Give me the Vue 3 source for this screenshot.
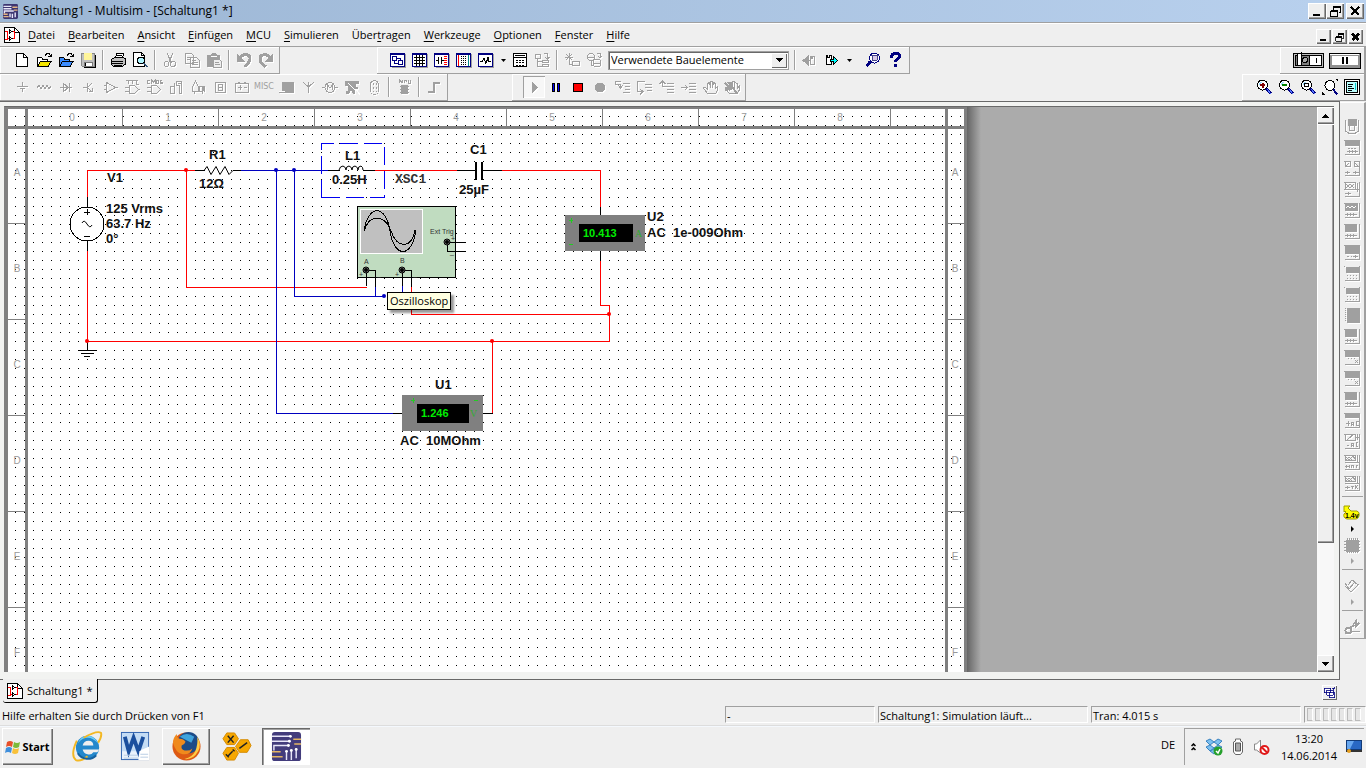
<script setup>
import { ref } from 'vue'

const menus = [
  ['', 'D', 'atei'], ['', 'B', 'earbeiten'], ['', 'A', 'nsicht'], ['', 'E', 'infügen'],
  ['', 'M', 'CU'], ['', 'S', 'imulieren'], ['Über', 't', 'ragen'], ['', 'W', 'erkzeuge'],
  ['', 'O', 'ptionen'], ['', 'F', 'enster'], ['', 'H', 'ilfe']
]
const component = ref('Verwendete Bauelemente')

const lens = '<circle cx="6.5" cy="6" r="5" fill="#fff" stroke="#000"/><path d="M3 5.500L5.500 3" stroke="#9df" fill="none"/><path d="M10.500 9.500l4 5" stroke="#000080" stroke-width="3"/><path d="M11 10l4 5" stroke="#5577ff"/>'
const folder = (c, d) => `<path d="M1.500 14.500v-9h4l1 1.500h5v2" fill="${c}" stroke="#000"/><path d="M1.500 14.500l3-5.500h11l-3.500 5.500z" fill="${d}" stroke="#000"/><path d="M9 3.500l2-2h2l2 3m0-3v3h-3" stroke="#000" fill="none"/>`
const win = (inner) => `<path d="M2 2h14v14h-14z" fill="#a0a0a0" stroke="none"/><path d="M0 1h15v14h-15z" fill="#000080" stroke="none"/><path d="M1 3h13v11h-13z" fill="#fff" stroke="none"/>${inner}`
const sheetIcon = '<path d="M.5 .5h10l5 5v10h-15z" fill="#fff" stroke="#000"/><path d="M10.500 .5v5h5" fill="none" stroke="#000"/><path d="M1 4.500h2v8h-2M3 11.500h4M8 4.500h2v7h-2" stroke="#f00" fill="none"/><path d="M5 2.500l3 2-3 2zM5 9.500l3 2-3 2z" stroke="#000" fill="#fff"/>'
const box = (inner) => `<path d="M0 1h1M1 15.500h14.500v-15" />${inner}`

const icons = {
  sheet: sheetIcon,
  fresh: '<path d="M2.500 1.500h7l4 4v9h-11z" fill="#fff" stroke="#000"/><path d="M9.500 1.500v4h4" stroke="#000" fill="none"/>',
  open: folder('#fff', '#f5e600'),
  samples: folder('#3b8cff', '#3b8cff'),
  save: '<path d="M1.500 1.500h13v13h-12l-1-1z" fill="#c0c0c0" stroke="#888"/><path d="M4 1h8v7h-8z" fill="#fff59a" stroke="none"/><path d="M4 10.500h8v4h-8z" fill="#fff" stroke="#777"/><path d="M5.500 11v3M15.500 3v12.500h-12" stroke="#000"/>',
  print: '<path d="M5.500 6.500l1-5h7l-1 5" fill="#fff" stroke="#000"/><path d="M1.500 7.500l3-2h9l2 1.500v5l-3 2.500h-9l-2-2z" fill="#c0c0c0" stroke="#000"/><path d="M7 3.500h5M6.500 5.500h5M1 9.500h12M1 11.500h12M4 13.500h8" stroke="#000"/>',
  preview: '<path d="M1.500 .5h8l3 3v11h-11z" fill="#fff" stroke="#000"/><path d="M9.500 .5v3h3" fill="none" stroke="#000"/><circle cx="9" cy="8.500" r="3.500" fill="#b0f4ff" stroke="#000"/><path d="M11.500 11l4 4" stroke="#357" stroke-width="2"/>',
  cut: '<path d="M5 1l4 9M11 1l-4 9"/><circle cx="4.500" cy="12" r="2.500"/><circle cx="11" cy="12" r="2.500"/>',
  copy: '<path d="M1.500 1.500h6l2 2v8h-8zM6.500 5.500h6l3 3v7h-9zM3 5.500h3M3 7.500h3M8 8.500h4M8 10.500h6M8 12.500h6"/>',
  paste: '<path d="M1 3h4l1-2h4l1 2h3v4h-6v8h-7z" fill="currentColor" stroke="none"/><path d="M7.500 7.500h6l2 2v6h-8z" fill="#efefef"/><path d="M9 10.500h4M9 12.500h5"/><path d="M5 4.500h6" stroke="#fff"/>',
  undo: '<path d="M4 6c3-5 11-4 10 1 0 4-4 5-5 8" stroke-width="3"/><path d="M1 1v9h8z" fill="currentColor" stroke="none"/>',
  redo: '<path d="M12 6c-3-5-10-4-10 1 0 5 4 6 6 8" stroke-width="3"/><path d="M15 1v9h-8z" fill="currentColor" stroke="none"/>',
  win1: win('<path d="M2.500 4.500h4v4h-4zM8.500 8.500h4v4h-4zM4.500 9v2.500h4M7 6.500h3v2" stroke="#000080" fill="none"/>'),
  win2: win('<path d="M2 5.500h11M2 8.500h11M2 11.500h11M4.500 3v11M7.500 3v11M10.500 3v11" stroke="#000" fill="none"/>'),
  win3: win('<path d="M2 8.500h3M7 8.500h3M4.500 5v7M7.500 5v7" stroke="#000"/><path d="M10 4.500h3M10 6.500h3M10 8.500h3M10 10.500h3M10 12.500h3" stroke="#f00"/>'),
  win4: win('<path d="M2.500 3v11" stroke="#f00"/><path d="M5.500 4v9M7.500 4v9M9.500 4v9" stroke="#000" stroke-dasharray="1 1"/><path d="M12.500 3v11" stroke="#088"/>'),
  win5: win('<path d="M2 9.500h2l2-3 2 5 2-6 1 4h2" stroke="#000" fill="none"/>'),
  calc: '<rect x="1.500" y="1.500" width="13" height="13" fill="#fff" stroke="#000"/><path d="M3 3.500h10M1 5.500h14" stroke="#000"/><path d="M4 8h9M4 10.500h9M4 13h9" stroke="#000" stroke-dasharray="2 1"/>',
  tree: '<path d="M1.500 2.500h5v4h-5zM9.500 1.500h4v4M11 5l2.500 2 2-2M8.500 8.500h6v2h-6zM8.500 12.500h6v2h-6zM3.500 7v7h5M4 9.500h4"/>',
  star: '<path d="M5 1v8M1 5h8M2 2l6 6M8 2l-6 6"/><path d="M8.500 9.500h7v4h-7zM5 9v3h3"/>',
  gears: '<circle cx="5" cy="5" r="3.500"/><circle cx="11" cy="11" r="4"/><path d="M1 5h8M5 8v5h2M7 11h8M11 1h3v5M12 4l2 2 2-2"/>',
  back: '<path d="M1 8.500l5-4v8z" fill="currentColor"/><path d="M5 8.500h3M8.500 12.500v-8h1v2h1v-2h2v8z"/>',
  forward: '<path d="M2.500 12.500v-9h1v2h2v-2h2v9z" stroke="#000" fill="#fff"/><path d="M6.500 7.500h3v-3l4 4-4 4v-3h-3z" fill="#0ff" stroke="#000"/>',
  find: '<circle cx="9.500" cy="6" r="5" fill="#fff" stroke="#000080"/><path d="M7 3.500h6l-1 5h-4z" fill="#d8c8e8" stroke="#448"/><path d="M5.500 9.500l-4 4.500" stroke="#000080" stroke-width="3"/>',
  help: '<path d="M4.500 6c-1-6 8-6 8-2 0 3-4 3-4 6" stroke="#000080" stroke-width="3" fill="none"/><path d="M7 12h3v3h-3z" fill="#000080" stroke="none"/>',
  ground: '<path d="M8.500 3v4M3 7.500h11M6 9.500h5M8.500 10v3"/>',
  resistor: '<path d="M1 9l2-3 2 4 2-4 2 4 2-4 2 4 2-3"/>',
  diode: '<path d="M2 8.500h12M5.500 4.500l5 4-5 4zM11.500 4v9"/>',
  transistor: '<path d="M3 8.500h4M7.500 4v9M8 8l4-4M8 9l4 4M9 12h3v-3"/>',
  opamp: '<path d="M4.500 3.500l9 5-9 5zM2 6.500h2M2 10.500h2M13 8.500h3"/>',
  ttl: '<path d="M2 1.500h12M4.500 1v4M8.500 1v4M12.500 1v4h2M5.500 6.500h5l4 4-4 4h-5zM1 8.500h4M1 12.500h4M14 10.500h2"/>',
  cmos: '<path d="M4 1.500h-3v3h3M5.500 5v-4l2 2 2-2v4M10.500 1.500h2v3h-2zM16 1.500h-2v1.500h2v1.500h-2M5.500 6.500h5l4 4-4 4h-5zM1 8.500h4M1 12.500h4"/>',
  digital: '<path d="M2.500 7.500h4v7h-4zM6.500 4v10M8.500 2.500h5v12h-2v-8h-3zM10 4.500h3"/>',
  mixed: '<path d="M2.500 8l3-6 3 6v4h-6zM4.500 12v3M9 7.500h3v5h-3zM13 7l2 6M15 7l-3 8"/>',
  indicator: '<rect x="3.500" y="3.500" width="10" height="10"/><path d="M6.500 5.500h4v6h-4zM6 8.500h5"/>',
  power: '<rect x="1.500" y="4.500" width="13" height="9"/><path d="M4 3h2M10 3h2M4 8.500h4M6 6v5M10 8.500h3"/>',
  laptop: '<path d="M4 3h12v9h-12zM1 12h15v2h-15z" fill="currentColor" stroke="none"/><path d="M1 12.500h6" stroke="#fff"/>',
  antenna: '<path d="M8.500 14v-6L3 3M8.500 8L14 3M8.500 3v6"/>',
  motor: '<circle cx="8" cy="8.500" r="5"/><path d="M0 8.500h3M13 8.500h3M5.500 11v-5l2.500 3 2.500-3v5"/>',
  ni: '<path d="M1 2h14v3h-3v3h2v2h-3v5h-2l-2-4-2 4h-3v-3h2v-5h-3z" fill="currentColor" stroke="none"/><path d="M4 4l7 7M12 10l3 5" stroke="#fff"/>',
  connector: '<rect x="4.500" y="1.500" width="8" height="14" rx="4"/><path d="M7 4v9M10 4v9" stroke-dasharray="2 2"/>',
  mcu: '<path d="M5 6h7v9h-7z" fill="currentColor" stroke="none"/><path d="M4 7.500h9M4 10.500h9M4 13.500h9M3.500 4v-3l2 2 1-2v3M8 4v-3h2v2M12.500 1v3h2v-3"/>',
  step: '<path d="M2 13h6v-9h6" stroke-width="2"/>',
  play: '<path d="M6 3l5 5.500-5 5.500z" fill="currentColor"/>',
  pause: '<path d="M5.500 4v9M10.500 4v9" stroke="#000" stroke-width="3"/><path d="M5.500 5v7M10.500 5v7" stroke="#00f"/>',
  stop: '<rect x="3.500" y="4.500" width="9" height="8" fill="#f00" stroke="#000"/>',
  record: '<circle cx="8" cy="8.500" r="4.500" fill="currentColor"/>',
  stepin: '<path d="M7 2.500h-5.500v3h5v3M4 6l2.500 3 2.500-3M9 4.500h7M11 7.500h5M11 10.500h5M9 13.500h7"/>',
  stepover: '<path d="M9 2.500h-7.500v10h5M4 10l3 2.500-3 3M9 5.500h7M9 8.500h7M11 11.500h5"/>',
  stepout: '<path d="M4.500 2v5h4M1.500 5l3-3 3 3M9 4.500h7M9 7.500h7M9 10.500h7M9 13.500h7"/>',
  runto: '<path d="M1 8.500h6M5 6l2.500 2.500-2.500 2.500M9 4.500h7M9 7.500h7M9 10.500h7M9 13.500h7"/>',
  hand: '<path d="M5 14l-3.500-5 2-.5 2 2v-6l2-1 1 5v-6h2v6l1-5 2 1v5l2-2v4l-2 3h-6z"/>',
  hands: '<path d="M5 14l-4-5 2-.5 2 2v-6l2-1 1 5v-6h2v6l1-5 2 1v5l2-2v4l-2 3h-6z"/><path d="M1 4l7 7M1 12l7-7M4 3l9 11" stroke-width="2"/>',
  zoomin: lens + '<path d="M4 6h5M6.500 3.500v5" stroke="#800000" stroke-width="2"/>',
  zoomout: lens + '<path d="M4 6h5" stroke="#008000" stroke-width="2"/>',
  zoomarea: lens + '<path d="M4.500 4.500h4v3h-4z" stroke="#000" fill="#fff"/>',
  zoomfit: '<circle cx="8" cy="6.500" r="5" fill="#fff" stroke="#000"/><path d="M11.500 10.500l3.500 5" stroke="#000080" stroke-width="2"/><path d="M16 0v3l-3-3zM0 16v-3l3 3z" fill="#000" stroke="none"/>',
  fullscreen: '<rect x=".5" y=".5" width="15" height="15" fill="#fff" stroke="#000"/><rect x="2.500" y="2.500" width="11" height="11" fill="#bff" stroke="#000"/><path d="M4 5.500h5M4 7.500h4M4 9.500h6M4 11.500h4" stroke="#000"/><path d="M11.500 4v7" stroke="#0cc"/>',
  i1: '<path d="M1.500 2v11l3 2h7l3-2v-11M4 1h8v6h-8z"/><path d="M4 1h8v5h-8z" fill="currentColor"/><circle cx="8" cy="10" r="3"/>',
  i2: box('<path d="M1 1h14v6h-14z" fill="currentColor" stroke="none"/><path d="M4 9.500h9" stroke-dasharray="2 1"/><path d="M3 12.500h11M5.500 11v3M8.500 11v3M11.500 11v3"/>'),
  i3: box('<path d="M1.500 1.500h5v5h-5zM10.500 1.500h5v5h-5zM2 6l3-3M11 3l3 3M1 12.500h5M9 12.500h6M3.500 11v3M11.500 11v3"/>'),
  i4: box('<path d="M1.500 1.500h10v7h-10zM2 3l4 4 4-4M2 7l4-4 4 4M1 12.500h6M4 11v3M13.500 2v9" /><path d="M0 8.500h16"/>'),
  i5: box('<path d="M1 1h12v7h-12z" fill="currentColor"/><path d="M2 6l2-2 2 2 2-2 2 2 2-2" stroke="#fff"/><path d="M1 12.500h12M3.500 11v3M6.500 11v3M9.500 11v3"/>'),
  i6: box('<path d="M1 1h11v7h-11z" fill="currentColor"/><path d="M1 12.500h12M3.500 11v3M6.500 11v3M9.500 11v3"/>'),
  i7: box('<path d="M1 1h14v8h-14z" fill="currentColor"/><path d="M3 12.500h5" stroke-dasharray="2 2"/><path d="M9 12.500h5M11.500 11v3"/>'),
  i8: box('<path d="M2 2h13v5h-13z" fill="currentColor"/><path d="M3 10.500h11M3 13.500h11" stroke-dasharray="1 2"/>'),
  i10: '<path d="M3 1h12v14h-12z" fill="currentColor"/><path d="M1.500 1v14" stroke-dasharray="1 1"/>',
  i12: box('<path d="M1 1h14v6h-14z" fill="currentColor"/><path d="M4 9.500h8" stroke-dasharray="1 2"/><path d="M11 11l3 3M14 11l-3 3"/>'),
  i15: box('<path d="M1 1h14v4h-14z" fill="currentColor"/><path d="M2 11.500h4M4 9v5M7.500 14v-4h2v4M7 12.500h3M15 9.500h-3v4h3v-2"/>'),
  i16: box('<path d="M1.500 1.500h10v6h-10zM3 7l7-6M11 4h5M13 1v6M3 12h2M7.500 14v-4h2v4M7 12.500h3M14 9.500h-2v4h2"/>'),
  i17: box('<path d="M1.500 1.500h10v5h-10zM2 3l3 3 4-4 2 3M2 6l3-3 3 3M1 8.500h15M13.500 1v7M1 12.500h5M2.500 11v3M5 11v3M7.500 14v-3h2v3M12 14v-3h2"/>'),
  i18: box('<path d="M1.500 1.500h10v5h-10zM2 3l3 3 4-4 2 3M2 6l3-3 3 3M1 8.500h15M13.500 1v7M1 12.500h5M3.500 11v3M7 11.500h3M8.500 11v3M11.500 10v4M14 10l-2 2 2 2"/>'),
  chip: '<path d="M2 3h12v11h-12z" fill="currentColor"/><path d="M3 1v15M5 1v15M7 1v15M9 1v15M11 1v15M13 1v15" stroke-dasharray="2 11 2"/><path d="M0 4h16M0 7h16M0 10h16M0 13h16"/>',
  amp: '<path d="M1 8l6 6 8-8M9 3l5 4M1 5l4 6 6-7-3-2-4 5"/>',
  clamp: '<circle cx="4.500" cy="11.500" r="3" stroke-width="2"/><path d="M7 9l5-7v5l3-3M8 12.500h8M6 8l6-2" stroke-width="1.500"/>',
  cascade: '<path d="M1.500 2.500h8v6h-8zM4.500 5.500h8v6h-8zM7.500 8.500h7v6h-7zM11 3.500h4M12 5l3-4" stroke="#000080" fill="#fff"/>'
}

const fileBar = [['fresh', 'Neu', 1], ['open', 'Öffnen', 1], ['samples', 'Beispiele', 1], ['save', 'Speichern', 1], null, ['print', 'Drucken', 1], ['preview', 'Seitenansicht', 1], null, ['cut', 'Ausschneiden'], ['copy', 'Kopieren'], ['paste', 'Einfügen'], null, ['undo', 'Rückgängig'], ['redo', 'Wiederholen']]
const viewBar = [['win1', 'Entwurf', 1], ['win2', 'Tabelle', 1], ['win3', 'Datenbank', 1], ['win4', 'Steckbrett', 1], ['win5', 'Graph', 1], 'drop', ['calc', 'Nachbearbeitung', 1], ['tree', 'Hierarchie'], null, ['star', 'Neues Bauelement'], ['gears', 'Bauelemente verwalten']]
const afterBar = [['back', 'Zurück'], ['forward', 'Weiter', 1], 'drop', 'gap', ['find', 'Suchen', 1], ['help', 'Hilfe', 1]]
const partBar = ['ground', 'resistor', 'diode', 'transistor', 'opamp', 'ttl', 'cmos', 'digital', 'mixed', 'indicator', 'power', 'misc', 'laptop', 'antenna', 'motor', 'ni', 'connector', null, 'mcu', null, 'step']
const simBar = [['play', 'Start'], ['pause', 'Pause', 1], ['stop', 'Stopp', 1], ['record', 'Aufnahme'], ['stepin', 'Hinein'], ['stepover', 'Darüber'], ['stepout', 'Heraus'], ['runto', 'Bis Cursor'], ['hand', 'Haltepunkt'], ['hands', 'Haltepunkte entfernen']]
const zoomBar = [['zoomin', 'Vergrößern'], ['zoomout', 'Verkleinern'], ['zoomarea', 'Bereich'], ['zoomfit', 'Einpassen'], ['fullscreen', 'Vollbild']]
const instruments = ['i1', 'i2', 'i3', 'i4', 'i5', 'i6', 'i7', 'i8', 'i8', 'i10', 'i6', 'i12', 'i12', 'i6', 'i15', 'i16', 'i17', 'i18']

const cols = [0, 1, 2, 3, 4, 5, 6, 7, 8]
const rows = ['A', 'B', 'C', 'D', 'E', 'F']
const nodes = [[186, 170, 'r'], [276, 170, 'b'], [294, 170, 'b'], [87, 341, 'r'], [492, 341, 'r'], [609, 314, 'r'], [384, 296, 'b']]
const jacks = [[366, 270], [402, 270], [447, 242]]
</script>

<template>
  <div class="app">
    <header class="title">
      <svg class="logo" viewBox="0 0 32 32"><rect width="32" height="32" rx="3" fill="#3d3672" /><path d="M1 5h17M1 10h17M3 20v-5h20M15 28v-8M20 30v-9M26 28v-10" stroke="#e8e6f8" stroke-width="3" fill="none" /><path d="M20 7h11M23 13h8M1 22h9M1 27h11" stroke="#e3b483" stroke-width="3" /></svg>
      <h1>Schaltung1 - Multisim - [Schaltung1 *]</h1>
      <div class="winbtns">
        <button aria-label="Minimieren"><svg viewBox="0 0 16 14"><path d="M4 11h7" stroke="#000" stroke-width="2" /></svg></button>
        <button aria-label="Wiederherstellen"><svg viewBox="0 0 16 14"><path d="M6 3h8M4 7h7" stroke="#000" stroke-width="2" /><path d="M6.500 3v3M13.500 3v5.500h-2M3.500 7v5.500h7v-6" stroke="#000" fill="none" /></svg></button>
        <button class="close" aria-label="Schließen"><svg viewBox="0 0 16 14"><path d="M4 3l8 8M12 3l-8 8" stroke="#000" stroke-width="2" /></svg></button>
      </div>
    </header>

    <nav class="menubar">
      <svg class="ic" viewBox="0 0 16 16" v-html="icons.sheet"></svg>
      <button v-for="m in menus" :key="m[2]">{{ m[0] }}<u>{{ m[1] }}</u>{{ m[2] }}</button>
      <div class="winbtns small">
        <button aria-label="Blatt minimieren"><svg viewBox="0 0 16 14"><path d="M4 11h7" stroke="#000" stroke-width="2" /></svg></button>
        <button aria-label="Blatt wiederherstellen"><svg viewBox="0 0 16 14"><path d="M6 3h8M4 7h7" stroke="#000" stroke-width="2" /><path d="M6.500 3v3M13.500 3v5.500h-2M3.500 7v5.500h7v-6" stroke="#000" fill="none" /></svg></button>
        <button aria-label="Blatt schließen"><svg viewBox="0 0 16 14"><path d="M4 3l8 8M12 3l-8 8" stroke="#000" stroke-width="3" /></svg></button>
      </div>
    </nav>

    <div class="barrow">
      <div class="bar file">
        <template v-for="(t, i) in fileBar" :key="i">
          <i v-if="!t" class="sep"></i>
          <button v-else class="tool" :class="{ off: !t[2] }" :aria-label="t[1]"><svg class="ic" viewBox="0 0 16 16" v-html="icons[t[0]]"></svg></button>
        </template>
      </div>
      <div class="bar view">
        <template v-for="(t, i) in viewBar" :key="i">
          <i v-if="!t" class="sep"></i>
          <button v-else-if="t === 'drop'" class="drop" aria-label="Mehr"><svg viewBox="0 0 5 3"><path d="M0 0h5l-2.500 3z" /></svg></button>
          <button v-else class="tool" :class="{ off: !t[2] }" :aria-label="t[1]"><svg class="ic" viewBox="0 0 16 16" v-html="icons[t[0]]"></svg></button>
        </template>
        <div class="combo">
          <select v-model="component" aria-label="Bauelemente"><option>Verwendete Bauelemente</option></select>
          <span><svg viewBox="0 0 7 4"><path d="M0 0h7l-3.500 4z" /></svg></span>
        </div>
        <i class="sep"></i>
        <template v-for="(t, i) in afterBar" :key="'a' + i">
          <button v-if="t === 'drop'" class="drop" aria-label="Mehr"><svg viewBox="0 0 5 3"><path d="M0 0h5l-2.500 3z" /></svg></button>
          <i v-else-if="t === 'gap'" class="gap"></i>
          <button v-else class="tool" :class="{ off: !t[2] }" :aria-label="t[1]"><svg class="ic" viewBox="0 0 16 16" v-html="icons[t[0]]"></svg></button>
        </template>
      </div>
      <div class="bar run">
        <button class="switch" aria-label="Simulationsschalter"><svg viewBox="0 0 32 17"><rect x=".5" y="1.500" width="30" height="14" fill="#c0c0c0" stroke="#000" /><path d="M2.500 3.500h26v10h-26z" fill="#fff" stroke="#000" /><path d="M3 4h13v9h-13z" fill="#808080" /><path d="M4.500 2l4-1v12h-4z" fill="#fff" stroke="#000" /><circle cx="12" cy="8" r="2.500" fill="#aaa" stroke="#000" /><path d="M16.500 3v11M23.500 6v5" stroke="#000" /></svg></button>
        <button class="switch" aria-label="Simulation anhalten"><svg viewBox="0 0 32 17"><path d="M0 1h32v16h-32z" fill="#000" /><path d="M1 2h30v14h-30z" fill="#909090" /><path d="M1 2h29v1h-29z" fill="#fff" /><path d="M3 4h26v9h-26z" fill="#fff" /><path d="M14 5v7M18 5v7" stroke="#000" stroke-width="2" /></svg></button>
      </div>
    </div>

    <div class="barrow">
      <div class="bar parts">
        <template v-for="(t, i) in partBar" :key="i">
          <i v-if="!t" class="sep"></i>
          <button v-else-if="t === 'misc'" class="tool off misc">MISC</button>
          <button v-else class="tool off" :aria-label="t"><svg class="ic" viewBox="0 0 16 16" v-html="icons[t]"></svg></button>
        </template>
      </div>
      <div class="bar sim">
        <button v-for="t in simBar" :key="t[0]" class="tool" :class="{ off: !t[2], pressed: t[0] === 'play' }" :aria-label="t[1]"><svg class="ic" viewBox="0 0 16 16" v-html="icons[t[0]]"></svg></button>
      </div>
      <div class="bar zoom">
        <button v-for="t in zoomBar" :key="t[0]" class="tool" :aria-label="t[1]"><svg class="ic" viewBox="0 0 16 16" v-html="icons[t[0]]"></svg></button>
      </div>
    </div>

    <main class="work">
      <section class="frame">
        <div class="canvas">
          <svg class="sheet" width="976" height="720" viewBox="5 107 976 720">
            <defs>
              <pattern id="dots" x="6" y="8" width="9" height="9" patternUnits="userSpaceOnUse"><rect width="1" height="1" fill="#000" /></pattern>
              <linearGradient id="shade"><stop offset="0" stop-color="#666" /><stop offset="1" stop-color="#ababab" /></linearGradient>
            </defs>
            <rect x="967" y="107" width="14" height="720" fill="url(#shade)" />
            <rect x="5" y="107" width="962" height="720" fill="#808080" />
            <path d="M8 109h17v17h-17zM28 109h917v17h-917zM948 109h16v17h-16zM8 129h17v700h-17zM28 129h917v700h-917zM948 129h16v700h-16z" fill="#fff" />
            <path d="M8 109h17v17h-17zM28 109h917v17h-917zM948 109h16v17h-16zM8 129h17v700h-17zM28 129h917v700h-917zM948 129h16v700h-16z" fill="url(#dots)" />
            <g class="rule">
              <template v-for="n in cols" :key="n">
                <path :d="`M${122.5 + 96 * n} 109v17`" />
                <text :x="72 + 96 * n" y="121">{{ n }}</text>
              </template>
              <template v-for="(r, n) in rows" :key="r">
                <path :d="`M8 ${223.5 + 96 * n}h17M948 ${223.5 + 96 * n}h16`" />
                <text x="17" :y="176 + 96 * n">{{ r }}</text>
                <text x="955" :y="176 + 96 * n">{{ r }}</text>
              </template>
            </g>

            <g class="wire red">
              <path d="M87.500 198v-27.500h108M186.500 170v117.500h180M87.500 251v90.500h522v-36h-9v-45M375 170.500h82M502 170.500h98.500v37M411.500 286v28.500h198M492.500 341v72" />
            </g>
            <g class="wire blue">
              <path d="M240 170.500h92M276.500 170v243.500h117M294.500 170v126.500h90M375.500 286v10M402.500 286v10" />
            </g>
            <path class="select" d="M321.500 197.500v-54h63v54z" />
            <g class="wire">
              <path d="M87.500 197v10M87.500 241v10M87.500 341v9M78 350.500h19M81 353.500h13M84 356.500h6" />
              <path d="M195 170.500h9l3 -4 4 8 5-8 4 8 5-8 4 8 4-4h8" shape-rendering="auto" />
              <path d="M328 170.500h11M363 170.500h12M457 170.500h18M483 170.500h19M600.500 207v8M600.500 251v9M393 413.500h9M483 413.500h9" />
              <path d="M339 170q1-4 4-4q3 1 3 4q0-4 3-4q3 1 3 4q0-4 3-4q3 1 3 4q0-4 3-4q2 1 2 4" shape-rendering="auto" />
              <path d="M476 162v18M482 162v18" stroke-width="2" />
              <circle cx="87" cy="224" r="17" fill="#fff" />
              <path d="M84 212.500h6M87.500 209v6M84 236.500h6" />
              <path d="M82 223q2-4 5 1t5 1" shape-rendering="auto" />
            </g>
            <g class="label">
              <text x="107" y="182">V1</text><text x="106" y="213">125 Vrms</text><text x="106" y="228">63.7 Hz</text><text x="106" y="243">0°</text>
              <text x="209" y="159">R1</text><text x="199" y="188">12Ω</text>
              <text x="345" y="160">L1</text><text x="332" y="184">0.25H</text>
              <text x="470" y="154">C1</text><text x="459" y="194">25µF</text>
              <text x="647" y="221">U2</text><text x="647" y="237">AC&nbsp; 1e-009Ohm</text>
              <text x="435" y="389">U1</text><text x="400" y="445">AC&nbsp; 10MOhm</text>
              <text class="mono" x="395" y="183">XSC1</text>
            </g>

            <g>
              <rect x="357.500" y="206.500" width="98" height="71" fill="#c0dcc0" stroke="#000" />
              <rect x="360.500" y="209.500" width="62" height="44" fill="#c0c0c0" stroke="#fff" />
              <path d="M364 231C368 204 386 204 390 231S412 259 416 230M364 231C369 214 385 214 391 231S411 250 415 230" fill="none" stroke="#000" />
              <g class="wire"><path d="M366.500 270v16M366 270.500h9.500v16M402.500 270v16M402 270.500h9.500v16M447 242.500h18M447.500 242v9.500h18" /></g>
              <g v-for="j in jacks" :key="j[0]" shape-rendering="auto"><circle :cx="j[0]" :cy="j[1]" r="3" fill="#888" stroke="#000" /><circle :cx="j[0]" :cy="j[1]" r="2" /></g>
              <g class="tiny"><text x="364" y="264">A</text><text x="400" y="263">B</text><text x="430" y="234">Ext Trig</text><text x="359" y="277">+</text><text x="377" y="276">_</text><text x="395" y="277">+</text><text x="413" y="276">_</text><text x="451" y="241">+</text><text x="450" y="254">_</text></g>
            </g>
            <g class="meter">
              <rect x="565" y="215" width="80" height="36" fill="#808080" /><rect x="579" y="224" width="54" height="18" />
              <text x="583" y="237">10.413</text><text class="unit" x="635" y="237">A</text><path d="M569 220.500h4M571.500 218v5M569 244.500h4" />
              <rect x="402" y="395" width="81" height="36" fill="#808080" /><rect x="417" y="404" width="52" height="19" />
              <text x="421" y="417">1.246</text><text class="unit" x="470" y="417">V</text><path d="M411 400.500h4M413.500 398v5M474 400.500h4" />
            </g>
            <circle v-for="n in nodes" :key="n.join()" :cx="n[0]" :cy="n[1]" r="2" shape-rendering="auto" :fill="n[2] === 'r' ? '#f00' : '#0000c0'" />
          </svg>
          <div class="tip" role="tooltip">Oszilloskop</div>
        </div>
        <div class="scroll">
          <button aria-label="Nach oben"><svg viewBox="0 0 7 4"><path d="M0 4h7l-3.500-4z" /></svg></button>
          <div class="track"><div class="thumb"></div></div>
          <button aria-label="Nach unten"><svg viewBox="0 0 7 4"><path d="M0 0h7l-3.500 4z" /></svg></button>
        </div>
      </section>
      <aside class="side">
        <button v-for="(n, i) in instruments" :key="i" class="inst" :aria-label="'Instrument ' + (i + 1)"><svg class="ic" viewBox="0 0 16 16" v-html="icons[n]"></svg></button>
        <i class="rule-h"></i>
        <button class="inst probe" aria-label="Messsonde"><svg viewBox="0 0 18 16"><path d="M1 1h6l-2 2 3 3h6q3 1 2 5-1 3-3 3h-9q-4-1-3-5l2-2-1-1-1 1z" fill="#ff0" stroke="#a0a000" /><text x="2" y="13">1.4v</text></svg></button>
        <button class="more dark" aria-label="Mehr Sonden"></button>
        <button class="inst" aria-label="LabVIEW"><svg class="ic" viewBox="0 0 16 16" v-html="icons.chip"></svg></button>
        <button class="more" aria-label="Mehr LabVIEW"></button>
        <i class="rule-h"></i>
        <button class="inst" aria-label="ELVIS"><svg class="ic" viewBox="0 0 16 16" v-html="icons.amp"></svg></button>
        <button class="more" aria-label="Mehr ELVIS"></button>
        <i class="rule-h"></i>
        <button class="inst" aria-label="Stromzange"><svg class="ic" viewBox="0 0 16 16" v-html="icons.clamp"></svg></button>
      </aside>
    </main>

    <div class="tabs">
      <button class="tab"><svg class="ic" viewBox="0 0 16 16" v-html="icons.sheet"></svg>Schaltung1 *</button>
      <button class="cascade" aria-label="Fenster anordnen"><svg class="ic" viewBox="0 0 16 16" v-html="icons.cascade"></svg></button>
    </div>

    <footer class="status">
      <span class="hint">Hilfe erhalten Sie durch Drücken von F1</span>
      <span class="cell c1">-</span>
      <span class="cell c2">Schaltung1: Simulation läuft...</span>
      <span class="cell c2">Tran: 4.015 s</span>
      <span class="cell c3"><i v-for="n in 7" :key="n"></i></span>
    </footer>

    <div class="taskbar">
      <button class="start">
        <svg viewBox="0 0 16 16"><path d="M2 3q3-2 6 0l-1 5q-3-2-6 0z" fill="#e8502a" /><path d="M9 3q3 2 6 0l-1 5q-3 2-6 0z" fill="#7dba3a" /><path d="M1 9q3-2 6 0l-1 5q-3-2-6 0z" fill="#3f8fdc" /><path d="M8 9q3 2 6 0l-1 5q-3 2-6 0z" fill="#f8c13a" /></svg>Start
      </button>
      <button class="task t1" aria-label="Internet Explorer"><svg viewBox="0 0 32 32"><circle cx="16" cy="17" r="12" fill="#2488cc" /><path d="M6 13q3-8 10-8t11 8q-5-6-11-6t-10 6z" fill="#6fd0f8" /><path d="M11 15q1-5 6-5t5 5z" fill="#efefef" /><path d="M11 19h17q-1 2-2 3h-4q-2 3-6 2-4-1-5-5z" fill="#efefef" /><path d="M5 10q-7 15-1 20q5 2 12-4M12 7q14-8 18-5q1 4-3 10" fill="none" stroke="#f3b824" stroke-width="2" /><path d="M6 23a12 12 0 0 0 19 2" stroke="#15609e" stroke-width="2" fill="none" /></svg></button>
      <button class="task t2" aria-label="Word"><svg viewBox="0 0 32 32"><rect x="1.500" y="1.500" width="28" height="28" fill="#e9f2fc" stroke="#2f62b0" /><path d="M2 2h27v15l-12 4h-15z" fill="#c4dcf5" /><path d="M5 6l4 15 5-14 5 14 5-15" fill="none" stroke="#1b4f9e" stroke-width="4" /><path d="M20 21l10-5v14h-11z" fill="#fff" /><path d="M4 25h15M4 28h15M21 24h8M21 27h8" stroke="#b9cce4" /></svg></button>
      <button class="task t3 raised" aria-label="Firefox"><svg viewBox="0 0 32 32"><circle cx="16" cy="16" r="14.500" fill="#dd5a14" /><circle cx="18" cy="12" r="11" fill="#1c4b87" /><path d="M9 6q7-6 15 0l-3 6-6-3z" fill="#3fa3dc" /><path d="M2 12q0-5 4-9 0 4 3 5 4 0 6 3-1 3-4 4-1 4 3 5 5 1 8-2-2 7-10 6-7-1-10-12z" fill="#f08a1d" /><path d="M27 6q5 8 1 15-5 9-14 8 8-2 11-8 3-7 2-15z" fill="#ffcb45" /></svg></button>
      <button class="task t4" aria-label="Werkzeuge"><svg viewBox="0 0 32 32"><g fill="#f6a700" stroke="#d68a00"><path d="M6 2h8l4 6-4 6h-8l-4-6z" /><path d="M20 9h8l3 6-4 7h-8l-4-6z" /><path d="M6 17h8l4 6-4 7h-8l-4-7z" /></g><path d="M7 5l6 7M13 5l-6 7M19 18l8-6M7 26l5-5M8 27l-3-3M12 19l2 2" stroke="#222" stroke-width="1.500" /></svg></button>
      <button class="task t5 active" aria-label="Multisim"><svg viewBox="0 0 32 32"><rect x="1" y="1" width="30" height="30" rx="3" fill="#433c7c" /><path d="M1 5.500h19M1 10.500h18M3 19v-4h15M3 15v5M16 30v-9M21 30v-10M26 28v-10" stroke="#e8e6f8" stroke-width="1.500" fill="none" /><path d="M23 8.500h8M24 13.500h7M1 21.500h9M1 26.500h11" stroke="#e3b463" stroke-width="1.500" /><g fill="#fff"><circle cx="20" cy="5.500" r="1.500" /><circle cx="19" cy="10.500" r="1.500" /><circle cx="18" cy="15" r="1.500" /><circle cx="16" cy="21" r="1.500" /><circle cx="21" cy="20" r="1.500" /><circle cx="26" cy="19" r="1.500" /></g></svg></button>
      <span class="lang">DE</span>
      <div class="tray">
        <button aria-label="Ausgeblendete Symbole"><svg width="5" height="8" viewBox="0 0 5 8"><path d="M.5 3l2-2 2 2M.5 7l2-2 2 2" stroke="#000" fill="none" stroke-width="1.500" /></svg></button>
        <button aria-label="Dropbox"><svg width="18" height="18" viewBox="0 0 18 18"><path d="M1 3l4-2 4 3-4 3zM17 3l-4-2-4 3 4 3zM1 9l4-2 4 3-4 3zM17 9l-4-2-4 3 4 3zM5 13l4-2 4 2-4 3z" fill="#7cc0f0" stroke="#3a82c0" /><circle cx="13" cy="13" r="4.500" fill="#26a02c" /><path d="M11 13l2 2 2-4" stroke="#fff" fill="none" stroke-width="1.500" /></svg></button>
        <button aria-label="Akku"><svg width="12" height="18" viewBox="0 0 12 18"><path d="M3.500 3v-2h5v2l2 1v10l-2 2.500h-5l-2-2.500v-10z" fill="#fff" stroke="#666" /><path d="M3.500 5h5v8h-5z" fill="#aaa" stroke="#555" /></svg></button>
        <button aria-label="Ton"><svg width="18" height="18" viewBox="0 0 18 18"><path d="M1.500 6h2l4-4v13l-4-3h-2z" fill="#fff" stroke="#888" /><circle cx="11.500" cy="12" r="4" fill="#fff" stroke="#e01818" stroke-width="2" /><path d="M9 9.500l5 5" stroke="#e01818" stroke-width="2" /></svg></button>
        <div class="clock"><span>13:20</span><span>14.06.2014</span></div>
        <button aria-label="Desktop"><svg width="16" height="14" viewBox="0 0 16 14"><rect x=".5" y=".5" width="15" height="9" fill="#2968c4" stroke="#123b78" /><path d="M1 1h7l-4 8h-3z" fill="#68a8f0" /><path d="M0 10h16v2h-16z" fill="#333" /><circle cx="3" cy="11" r="2" fill="#e8a020" /></svg></button>
      </div>
    </div>
  </div>
</template>

<style>
body { background: #efefef; overflow: hidden; }
</style>

<style scoped>
.app { height: 100vh; display: flex; flex-direction: column; background: #efefef; color: #000; font: 11px/16px "Open Sans", "Noto Sans", sans-serif; overflow: hidden; }
button { font: inherit; color: inherit; background: none; border: 0; padding: 0; margin: 0; display: flex; align-items: center; justify-content: center; flex: none; }
svg { display: block; flex: none; }
.ic { width: 16px; height: 16px; fill: none; stroke: currentColor; shape-rendering: crispEdges; overflow: visible; }
.title { height: 23px; flex: none; display: flex; align-items: center; background: linear-gradient(90deg, #9cb6d4, #b9d1ee); border-bottom: 1px solid #a0a0a0; box-sizing: border-box; padding: 0 2px 0 3px; }
.logo { width: 15px; height: 15px; }
h1 { font: inherit; font-size: 12px; margin: 0 auto 0 5px; }
.winbtns { display: flex; }
.winbtns button, .start, .raised, .scroll button { background: #efefef; box-shadow: inset 1px 1px #fff, inset -1px -1px #696969, inset -2px -2px #a0a0a0; }
.winbtns button { width: 18px; height: 16px; }
.winbtns svg { width: 16px; height: 14px; shape-rendering: crispEdges; }
.winbtns .close { margin-left: 2px; }
.menubar { height: 24px; flex: none; display: flex; align-items: center; padding: 0 3px 0 4px; gap: 13px; border-top: 1px solid #fff; border-bottom: 1px solid #a0a0a0; box-sizing: border-box; }
.menubar > .ic { margin-right: -5px; }
.menubar > button { display: block; }
u { text-underline-offset: 2px; }
.small { margin-left: auto; gap: 1px; padding-top: 3px; }
.winbtns.small button { width: 15px; height: 15px; }
.winbtns.small svg { width: 13px; height: 12px; }
.barrow { display: flex; flex: none; height: 27px; }
.bar { display: flex; align-items: center; box-sizing: border-box; border-bottom: 1px solid #a0a0a0; border-right: 1px solid #a0a0a0; box-shadow: inset 1px 1px #fff; flex: none; }
.file { width: 280px; padding-left: 11px; }
.view { width: 533px; margin-left: 97px; padding-left: 10px; }
.run { margin-left: auto; width: 86px; padding-left: 13px; gap: 4px; border-right: 2px solid #a0a0a0; }
.parts { width: 448px; padding-left: 11px; }
.sim { width: 234px; margin-left: 64px; padding-left: 11px; }
.zoom { width: 124px; margin-left: auto; padding-left: 11px; border-right: 2px solid #a0a0a0; }
.tool { width: 22px; height: 22px; }
.off { color: #a0a0a0; }
.off svg, .side .ic { filter: drop-shadow(1px 1px 0 #fff); }
.misc { font: 8px/10px "DejaVu Sans", sans-serif; }
.pressed { background: #f7f7f7; box-shadow: inset 1px 1px #a0a0a0, inset -1px -1px #fff; }
.sep { width: 2px; height: 20px; margin: 0 3px; box-sizing: border-box; border-left: 1px solid #a0a0a0; border-right: 1px solid #fff; flex: none; }
.gap { width: 7px; flex: none; }
.drop { width: 12px; height: 22px; }
.drop svg { width: 5px; height: 3px; }
.combo { width: 181px; height: 19px; margin: 0 2px 0 3px; display: flex; flex: none; position: relative; box-sizing: border-box; background: #fff; border: 1px solid #a0a0a0; box-shadow: inset 1px 1px #696969; }
.combo select { appearance: none; flex: 1; border: 0; background: none; font: inherit; color: #000; padding: 0 0 0 2px; margin: 0; height: 17px; }
.combo span { position: absolute; right: 1px; top: 1px; width: 16px; height: 15px; display: flex; align-items: center; justify-content: center; background: #efefef; box-shadow: inset 1px 1px #fff, inset -1px -1px #696969; pointer-events: none; }
.combo svg, .scroll svg { width: 7px; height: 4px; shape-rendering: crispEdges; }
.switch, .switch svg { width: 32px; height: 17px; shape-rendering: crispEdges; }
.work { flex: 1; min-height: 0; display: flex; }
.frame { flex: 1; min-width: 0; display: flex; position: relative; border-top: 1px solid #696969; border-right: 1px solid #696969; border-bottom: 1px solid #696969; box-sizing: border-box; padding: 4px 5px 7px 4px; background: #f2f3f1; }
.canvas { flex: 1; min-width: 0; position: relative; overflow: hidden; background: #ababab; border-top: 1px solid #696969; border-left: 1px solid #808080; }
.sheet { position: absolute; left: 0; top: 0; shape-rendering: crispEdges; }
.rule path { stroke: #808080; }
.rule text { font: 10px "Liberation Sans", Arial, sans-serif; fill: #999; text-anchor: middle; }
.wire { fill: none; stroke: #000; }
.red { stroke: #f00; }
.blue { stroke: #0000c0; }
.select { fill: none; stroke: #0000f0; stroke-dasharray: 18 6; }
.label { font: bold 13px "Liberation Sans", Arial, sans-serif; fill: #111; }
.mono { font: bold 13px "Liberation Mono", monospace; fill: #333; }
.tiny { font: 7px "Liberation Sans", Arial, sans-serif; fill: #333; }
.meter text { font: bold 11px "Liberation Sans", Arial, sans-serif; fill: #0e0; }
.meter .unit { font: 10px "Liberation Serif", serif; fill: #3a3; }
.meter path { stroke: #2c2; }
.tip { position: absolute; left: 382px; top: 185px; border: 1px solid #000; background: #ffffe1; padding: 0 2px; line-height: 16px; box-shadow: 3px 3px 2px #0006; }
.scroll { width: 17px; flex: none; display: flex; flex-direction: column; border-top: 1px solid #696969; }
.scroll button { width: 17px; height: 17px; }
.track { flex: 1; background: #f8f8f8; }
.thumb { height: 79%; background: #efefef; box-shadow: inset 1px 1px #fff, inset -1px -1px #696969, inset -2px -2px #a0a0a0; }
.side { width: 26px; height: 537px; margin-top: 1px; flex: none; display: flex; flex-direction: column; align-items: center; color: #a0a0a0; padding-top: 12px; box-sizing: border-box; border-top: 1px solid #fff; border-right: 2px solid #a0a0a0; border-bottom: 1px solid #a0a0a0; }
.inst { width: 22px; height: 21px; }
.side .probe svg { width: 18px; height: 16px; }
.probe text { font: bold 7px "Liberation Sans", sans-serif; fill: #000; }
.rule-h { width: 21px; height: 1px; background: #a0a0a0; margin: 3px 0 5px; flex: none; }
.more { height: 11px; width: 22px; }
.more::before { content: ""; border: 3px solid transparent; border-left-color: #a0a0a0; border-right: 0; }
.dark::before { border-left-color: #000; }
.tabs { height: 26px; flex: none; display: flex; justify-content: space-between; align-items: flex-start; padding: 0 29px 0 3px; }
.tab { height: 24px; margin-top: -1px; padding: 0 4px; gap: 4px; background: #efefef; border: solid #000; border-width: 0 1px 1px 0; border-radius: 0 0 3px 3px; position: relative; }
.cascade { width: 15px; height: 15px; margin-top: 5px; background: #efefef; box-shadow: inset 1px 1px #fff, inset -1px -1px #696969; }
.cascade svg { width: 13px; height: 13px; }
.status { height: 19px; flex: none; display: flex; gap: 3px; align-items: flex-start; border-bottom: 1px solid #ddd; line-height: 17px; }
.hint { flex: 1; padding-left: 2px; padding-top: 1px; }
.cell { height: 17px; box-sizing: border-box; border: solid; border-width: 1px; border-color: #a0a0a0 #fff #fff #a0a0a0; padding-left: 1px; flex: none; }
.c1 { width: 150px; }
.c2 { width: 210px; }
.c3 { width: 62px; display: flex; gap: 2px; padding: 1px 2px; }
.c3 i { width: 6px; height: 13px; box-sizing: border-box; border: 1px solid #bbb; border-right-color: #fff; background: #e6e6e6; }
.taskbar { height: 42px; flex: none; display: flex; align-items: flex-start; padding: 1px 2px 0; box-sizing: border-box; border-top: 1px solid #f4f8fd; }
.start { width: 51px; height: 37px; font-weight: bold; gap: 1px; }
.start svg { width: 16px; height: 16px; }
.task { width: 48px; height: 37px; }
.task svg { width: 31px; height: 31px; }
.t1 { margin-left: 10px; }
.t3 { margin-left: 3px; }
.t4 { margin-left: 2px; }
.t5 { margin-left: 2px; }
.active { background: #fff; box-shadow: inset 1px 1px #696969, inset 2px 2px #a0a0a0; }
.lang { margin: 9px 0 0 auto; padding-right: 5px; }
.tray { margin-left: 4px; width: 180px; height: 37px; display: flex; align-items: center; gap: 9px; padding: 0 2px 0 6px; box-sizing: border-box; border-left: 1px solid #a0a0a0; border-top: 1px solid #a0a0a0; }
.clock { display: flex; flex-direction: column; align-items: center; line-height: 17px; margin-left: auto; }
</style>
